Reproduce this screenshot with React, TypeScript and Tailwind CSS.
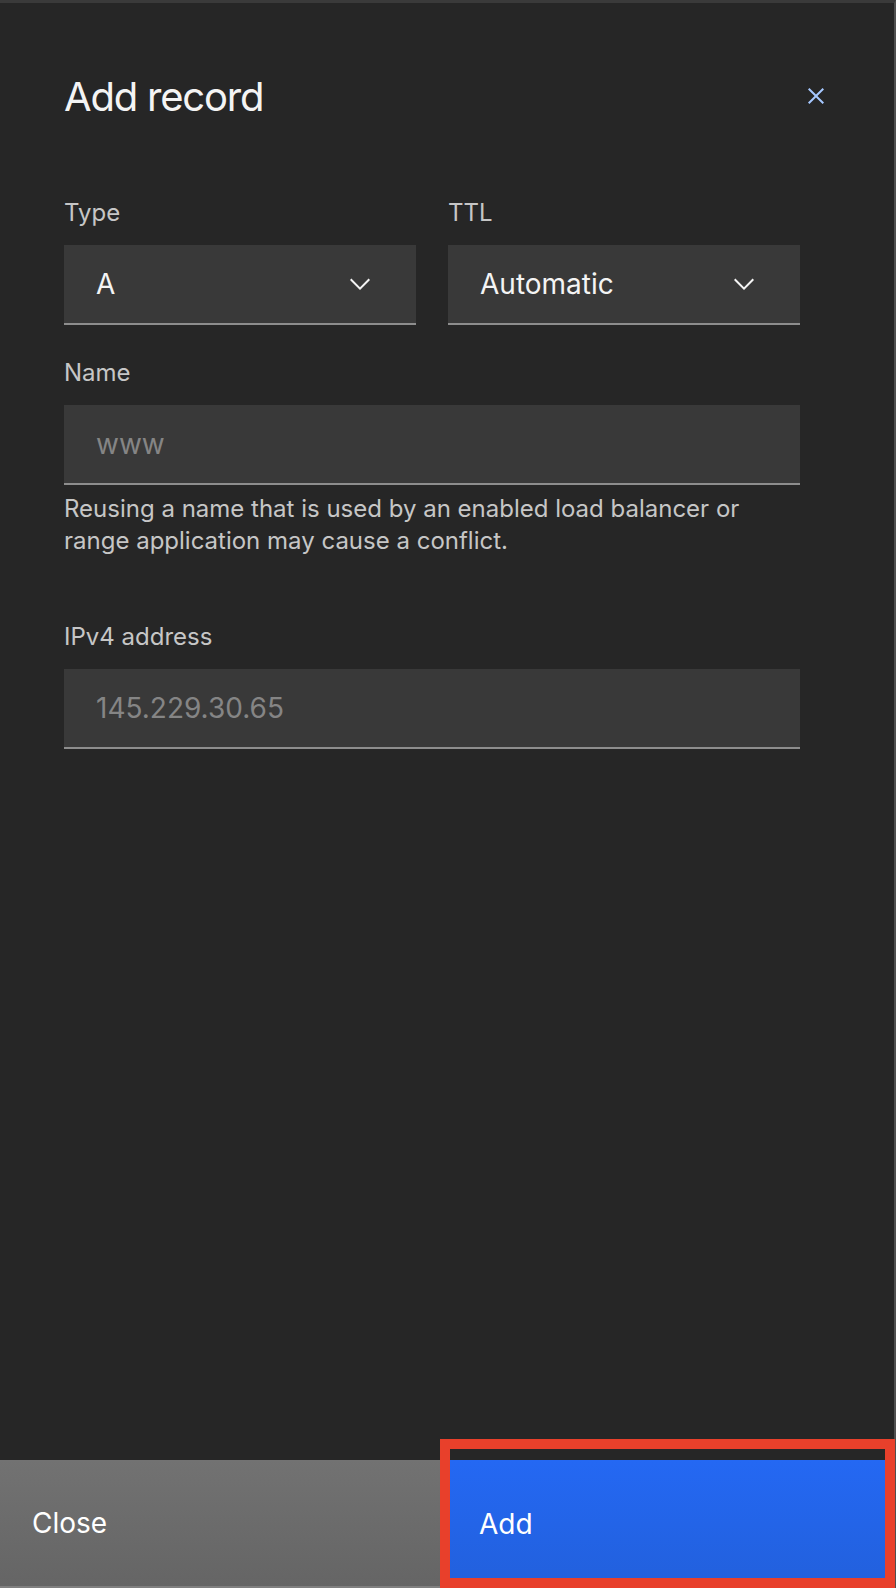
import React from "react";

const font = { fontFamily: "Inter, 'Noto Sans', sans-serif" };

function Chevron() {
  return (
    <svg width="32" height="32" viewBox="0 0 16 16" fill="#f4f4f4">
      <path d="M8 11L3 6 3.7 5.3 8 9.6 12.3 5.3 13 6z" />
    </svg>
  );
}

function SelectField({ label, value }: { label: string; value: string }) {
  return (
    <div className="flex-1 flex flex-col">
      <label className="text-[24px] leading-[32px] text-[#c6c6c6] mb-4">{label}</label>
      <div className="h-20 bg-[#393939] border-b-2 border-[#8d8d8d] flex items-center justify-between pl-8 pr-10">
        <span className="text-[28px] text-[#f4f4f4]">{value}</span>
        <Chevron />
      </div>
    </div>
  );
}

function TextField({ label, placeholder }: { label: string; placeholder: string }) {
  return (
    <div className="flex flex-col">
      <label className="text-[24px] leading-[32px] text-[#c6c6c6] mb-4">{label}</label>
      <div className="h-20 bg-[#393939] border-b-2 border-[#8d8d8d] flex items-center pl-8">
        <span className="text-[28px] text-[#858585]">{placeholder}</span>
      </div>
    </div>
  );
}

export default function App() {
  return (
    <div
      style={font}
      className="relative w-[896px] h-[1588px] bg-[#262626] border-t-[3px] border-t-[#3a3a3a] border-r-2 border-r-[#4f4f4f] flex flex-col"
    >
      {/* header */}
      <div className="flex justify-between items-start pl-16 pr-[62px] pt-[70px]">
        <h2 className="text-[40px] leading-[48px] text-[#f4f4f4] font-normal tracking-[-1.2px]">Add record</h2>
        <button className="mt-[7px]">
          <svg width="32" height="32" viewBox="0 0 16 16" fill="#a6c8ff">
            <path d="M12 4.7L11.3 4 8 7.3 4.7 4 4 4.7 7.3 8 4 11.3 4.7 12 8 8.7 11.3 12 12 11.3 8.7 8z" />
          </svg>
        </button>
      </div>

      {/* form */}
      <div className="pl-16 pr-[94px] mt-[76px] flex flex-col">
        <div className="flex gap-8">
          <SelectField label="Type" value="A" />
          <SelectField label="TTL" value="Automatic" />
        </div>

        <div className="mt-8">
          <TextField label="Name" placeholder="www" />
          <p className="mt-2 text-[24px] leading-[32px] text-[#c6c6c6]">
            Reusing a name that is used by an enabled load balancer or
            <br />
            range application may cause a conflict.
          </p>
        </div>

        <div className="mt-16">
          <TextField label="IPv4 address" placeholder="145.229.30.65" />
        </div>
      </div>

      {/* footer */}
      <div className="mt-auto flex h-32">
        <button className="flex-1 flex items-center pl-8 text-[28px] text-white bg-gradient-to-b from-[#727272] to-[#656565] border-b-2 border-[#808080]">
          Close
        </button>
        <button className="flex-1 flex items-center pl-8 text-[28px] text-white bg-gradient-to-b from-[#2468f3] to-[#2260dc]">
          Add
        </button>
      </div>

      {/* highlight annotation */}
      <div className="absolute left-[440px] top-[1436px] w-[455px] h-[149px] border-[10px] border-[#e8402b] pointer-events-none" />
    </div>
  );
}
